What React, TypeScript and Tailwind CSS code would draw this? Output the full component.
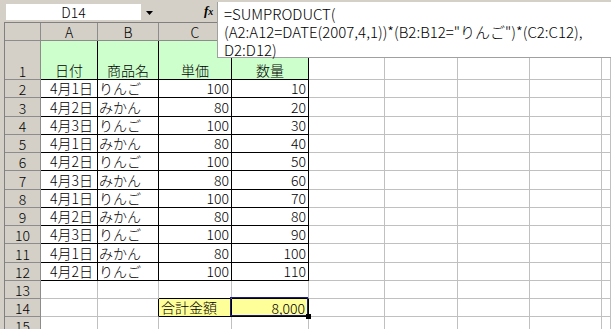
import React from "react";

const rowHeights = "grid-rows-[18px_39px_18px_19px_18px_18px_18px_19px_18px_18px_18px_19px_18px_18px_18px_18px]";
const colLetters = ["A", "B", "C", "D", "E", "F", "G", "H", "I"];

// 売上データ (A2:D12)
const sales: [string, string, number, number][] = [
  ["4月1日", "りんご", 100, 10],
  ["4月2日", "みかん", 80, 20],
  ["4月3日", "りんご", 100, 30],
  ["4月1日", "みかん", 80, 40],
  ["4月2日", "りんご", 100, 50],
  ["4月3日", "みかん", 80, 60],
  ["4月1日", "りんご", 100, 70],
  ["4月2日", "みかん", 80, 80],
  ["4月3日", "りんご", 100, 90],
  ["4月1日", "みかん", 80, 100],
  ["4月2日", "りんご", 100, 110],
];

const headers = ["日付", "商品名", "単価", "数量"];

function HeaderCell({ children }: { children?: React.ReactNode }) {
  return (
    <div className="flex items-center justify-center bg-[#d4d0c8] border-r border-b border-[#8c8c8c] text-[14px] leading-none font-light text-black">
      {children}
    </div>
  );
}

function RowHead({ n }: { n: number }) {
  return (
    <div className="flex items-end justify-center bg-[#d4d0c8] border-r border-b border-[#8c8c8c] text-[14px] leading-[16px] font-light text-black">
      {n}
    </div>
  );
}

function DataCell({ row, col }: { row: number; col: number }) {
  // col 0 = A ... 8 = I
  const inTable = row >= 1 && row <= 12 && col <= 3;
  let cls = "border-[#c0c0c0] bg-white";
  let content: React.ReactNode = null;
  let align = "justify-start";

  if (inTable) {
    cls = "border-black bg-white";
    if (row === 1) {
      cls = "border-black bg-[#ccffcc]";
      content = headers[col];
      align = "justify-center";
    } else {
      const r = sales[row - 2];
      if (col === 0) {
        content = r[0];
        align = "justify-end pr-[4px]";
      } else if (col === 1) {
        content = r[1];
        align = "justify-start pl-[1px]";
      } else {
        content = r[col];
        align = "justify-end pr-[2px]";
      }
    }
  } else if (row === 13 && (col === 2 || col === 3)) {
    cls = "border-[#c0c0c0] border-b-black bg-white";
  } else if (row === 14 && col === 1) {
    cls = "border-[#c0c0c0] border-r-black bg-white";
  } else if (row === 14 && col === 2) {
    cls = "border-black bg-[#ffff99]";
    content = "合計金額";
    align = "justify-start pl-[2px]";
  } else if (row === 14 && col === 3) {
    return (
      <div className="relative flex items-end justify-end border-r border-b border-black bg-[#ffff99] pr-[3px] text-[14px] leading-[16px] font-light">
        8,000
        <div className="absolute left-[-2px] top-[-2px] right-0 bottom-0 border border-[#1a1a80]" />
        <div className="absolute right-[-3px] bottom-[-3px] z-10 h-[5px] w-[5px] bg-black" />
      </div>
    );
  }

  return (
    <div className={`flex items-end whitespace-nowrap border-r border-b pb-[1px] text-[14px] leading-[16px] font-light text-black ${cls} ${align}`}>
      {content}
    </div>
  );
}

export default function App() {
  const rows = Array.from({ length: 15 }, (_, i) => i + 1);

  return (
    <div className="relative w-[611px] h-[329px] overflow-hidden bg-[#d4d0c8] font-['Noto_Sans_CJK_JP',sans-serif] text-black">
      {/* 名前ボックス / 数式バー */}
      <div className="flex h-[22px] items-start">
        <div className="ml-[6px] mt-[4px] flex h-[16px] w-[135px] items-center justify-center bg-white text-[14px] font-light leading-none">
          D14
        </div>
        <svg className="ml-[5px] mt-[11px]" width="7" height="4" viewBox="0 0 7 4">
          <polygon points="0,0 7,0 3.5,4" fill="#000" />
        </svg>
        <span className="ml-[51px] mt-[4px] font-['Liberation_Serif',serif] text-[13px] font-bold italic leading-none">
          f<span className="text-[10px]">x</span>
        </span>
      </div>

      <div className="absolute left-[217px] top-[2px] z-20 h-[56px] w-[394px] border-l border-b border-[#a0a0a0] bg-white pl-[6px] pt-[3px] text-[15px] font-light leading-[18px] whitespace-pre">
        <div>=SUMPRODUCT(</div>
        <div>(A2:A12=DATE(2007,4,1))*(B2:B12="りんご")*(C2:C12),</div>
        <div>D2:D12)</div>
      </div>

      {/* シート (D列以降の列見出しは数式バーの下に隠れている) */}
      <div className={`ml-[4px] grid grid-cols-[36px_57px_61px_73px_77px_76px_73px_72px_72px_1fr] ${rowHeights} border-t border-l border-[#808080] bg-white`}>
        <HeaderCell />
        {colLetters.map((c, i) => (
          <HeaderCell key={c}>{i < 3 ? c : null}</HeaderCell>
        ))}
        {rows.map((r) => (
          <React.Fragment key={r}>
            <RowHead n={r} />
            {colLetters.map((_, ci) => (
              <DataCell key={ci} row={r} col={ci} />
            ))}
          </React.Fragment>
        ))}
      </div>
    </div>
  );
}
